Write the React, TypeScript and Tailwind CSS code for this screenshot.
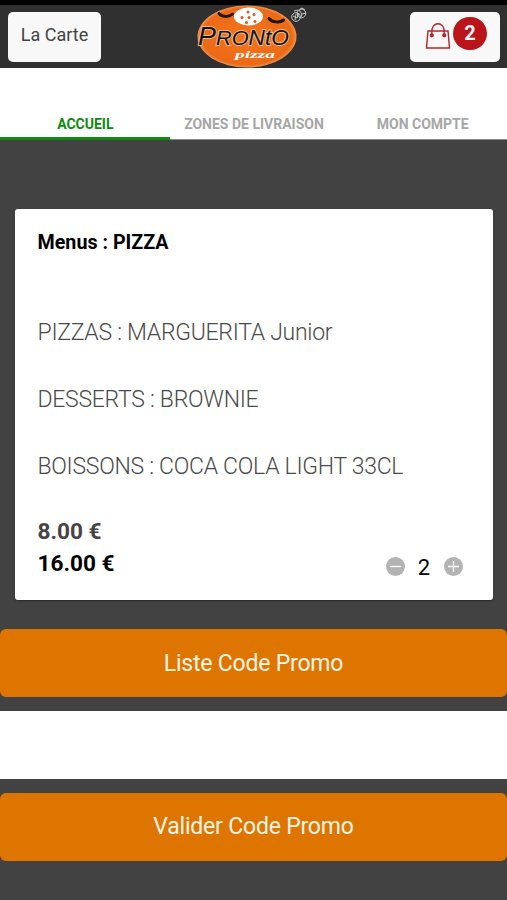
const tabs = ['ACCUEIL', 'ZONES DE LIVRAISON', 'MON COMPTE'];

const items = [
  'PIZZAS : MARGUERITA Junior',
  'DESSERTS : BROWNIE',
  'BOISSONS : COCA COLA LIGHT 33CL',
];

const Logo = () => (
  <svg className="h-[64px] w-[118px]" viewBox="0 0 118 64">
    <defs>
      <radialGradient id="dough" cx="50%" cy="50%" r="52%">
        <stop offset="0%" stopColor="#f4741c" />
        <stop offset="88%" stopColor="#ec6a16" />
        <stop offset="100%" stopColor="#f0a468" />
      </radialGradient>
    </defs>
    <ellipse cx="54" cy="32.500" rx="49.500" ry="31" fill="url(#dough)" />
    {/* Toppings */}
    <ellipse cx="55.500" cy="12.500" rx="14.500" ry="9" fill="#fff" />
    <g fill="#e0561c">
      <circle cx="55" cy="8" r="1.500" />
      <circle cx="61" cy="10.500" r="1.500" />
      <circle cx="49" cy="13.500" r="1.500" />
      <circle cx="56" cy="13.500" r="1.500" />
      <circle cx="62" cy="17.500" r="1.500" />
      <circle cx="53.500" cy="18.500" r="1.500" />
    </g>
    <g fill="none" stroke="#1d1512" strokeWidth="3" strokeLinecap="round">
      <path d="M26 9.500c2.500 3.500 10 4 13.500 .5" />
      <path d="M76 14.500c3 4 11 4.500 14.500 1.500" />
    </g>
    <text
      x="5"
      y="41"
      textLength="91"
      lengthAdjust="spacingAndGlyphs"
      fill="#171210"
      stroke="#e9b98e"
      strokeWidth="2"
      paintOrder="stroke"
      className="font-['Liberation_Sans',sans-serif] italic"
    >
      <tspan fontSize="26">P</tspan>
      <tspan fontSize="21">RO</tspan>
      <tspan fontSize="22">N</tspan>
      <tspan fontSize="22">tO</tspan>
    </text>
    <text
      x="42"
      y="53.500"
      fontSize="11"
      textLength="40"
      lengthAdjust="spacingAndGlyphs"
      fill="#fff"
      className="font-['Liberation_Serif',serif] font-bold italic"
    >
      pizza
    </text>
    {/* Small tomato mark */}
    <g fill="none" stroke="#d6d6d6" strokeWidth="0.900">
      <circle cx="103" cy="13" r="4.300" />
      <circle cx="108.500" cy="9.500" r="4.300" />
      <path d="M100 12l4 2 2-5M103 10l-1 6M106 6l3 4 4-1M109 10l-1 3M107 5l2-1 3 2M101 7l4-1" />
    </g>
  </svg>
);

const BagIcon = () => (
  <svg className="h-[28px] w-[26px]" viewBox="0 0 26 28" fill="none" stroke="#b9202a" strokeWidth="1.400">
    <path d="M3 9h20l1.500 17h-23z" />
    <path d="M6.800 13V9c0-4 2.500-7.200 6.200-7.200S19.200 5 19.200 9v4" />
    <circle cx="6.800" cy="13.300" r="1.400" fill="#b9202a" />
    <circle cx="19.200" cy="13.300" r="1.400" fill="#b9202a" />
  </svg>
);

const Header = () => (
  <header className="flex h-[68px] items-start border-t-[5px] border-black bg-[#303030] pr-[7px] pl-2">
    <button className="mt-[7px] h-[50px] w-[93px] rounded-[5px] bg-[#f8f8f8] pb-1.5 text-[18px] text-[#444]">
      La Carte
    </button>
    <div className="-mt-px ml-[92px]">
      <Logo />
    </div>
    <button className="mt-[7px] ml-auto flex h-[50px] w-[90px] items-start rounded-[5px] bg-[#f8f8f8] pt-[5px] pl-[15px]">
      <span className="mt-[5px]">
        <BagIcon />
      </span>
      <span className="ml-[2px] flex h-[33px] w-[34px] items-center justify-center rounded-full bg-[#ba141a] pb-0.5 text-[20px] font-bold text-[#f8f8f8]">
        2
      </span>
    </button>
  </header>
);

const Tabs = () => (
  <nav className="flex h-[72px] border-b border-[#8a8a8a] bg-white">
    {tabs.map((tab, index) => (
      <div
        key={tab}
        className={`flex flex-1 items-end justify-center text-[14px] leading-4 font-bold whitespace-nowrap ${
          index === 0
            ? '-mb-px border-b-[3px] border-[#108a10] pb-[5px] pl-px text-[#0c8c0c]'
            : 'pb-[7px] text-[#a6a6a6]'
        }`}
      >
        {tab}
      </div>
    ))}
  </nav>
);

const Quantity = () => (
  <div className="flex items-center">
    <svg className="h-[19px] w-[19px]" viewBox="0 0 19 19">
      <circle cx="9.500" cy="9.500" r="9.500" fill="#b3b3b3" />
      <path d="M4 9.500h11" stroke="#fff" strokeWidth="1.300" />
    </svg>
    <span className="w-[39px] pt-0.5 text-center text-[22px] leading-6 text-black">2</span>
    <svg className="h-[19px] w-[19px]" viewBox="0 0 19 19">
      <circle cx="9.500" cy="9.500" r="9.500" fill="#b3b3b3" />
      <path d="M4 9.500h11M9.500 4v11" stroke="#fff" strokeWidth="1.300" />
    </svg>
  </div>
);

const App = () => {
  return (
    <div className="h-[900px] w-[507px] overflow-hidden bg-[#424242] font-['Roboto',sans-serif]">
      <Header />
      <Tabs />

      <section className="mt-[69px] mr-[14px] ml-[15px] flex h-[391px] flex-col rounded-[3px] bg-white pr-[30.5px] pl-[22.5px] shadow-[0_1px_2px_rgba(0,0,0,0.4)]">
        <h2 className="mt-[22px] text-[19.7px] leading-6 font-bold text-black">Menus : PIZZA</h2>
        <ul className="mt-[63px] flex flex-col gap-[37px]">
          {items.map((item) => (
            <li
              key={item}
              className="text-[23px] leading-[30px] font-light tracking-[-0.28px] whitespace-nowrap text-[#4a4a4a]"
            >
              {item}
            </li>
          ))}
        </ul>
        <div className="mt-[34px] text-[22.6px] leading-8 font-bold text-[#444]">8.00 €</div>
        <div className="flex h-8 items-center justify-between">
          <span className="text-[22.6px] leading-8 font-bold text-black">16.00 €</span>
          <div className="mt-[5px]">
            <Quantity />
          </div>
        </div>
      </section>

      <button className="mt-[29px] block h-[68px] w-full rounded-[6px] bg-[#de7500] pt-0.5 text-[23px] tracking-[-0.2px] text-[#fff5e6]">
        Liste Code Promo
      </button>
      <input className="mt-[14px] block h-[68px] w-full bg-white px-4 text-[23px] outline-none" />
      <button className="mt-[14px] block h-[68px] w-full rounded-[6px] bg-[#de7500] text-[23px] tracking-[-0.2px] text-[#fff5e6]">
        Valider Code Promo
      </button>
    </div>
  );
};

export default App;
